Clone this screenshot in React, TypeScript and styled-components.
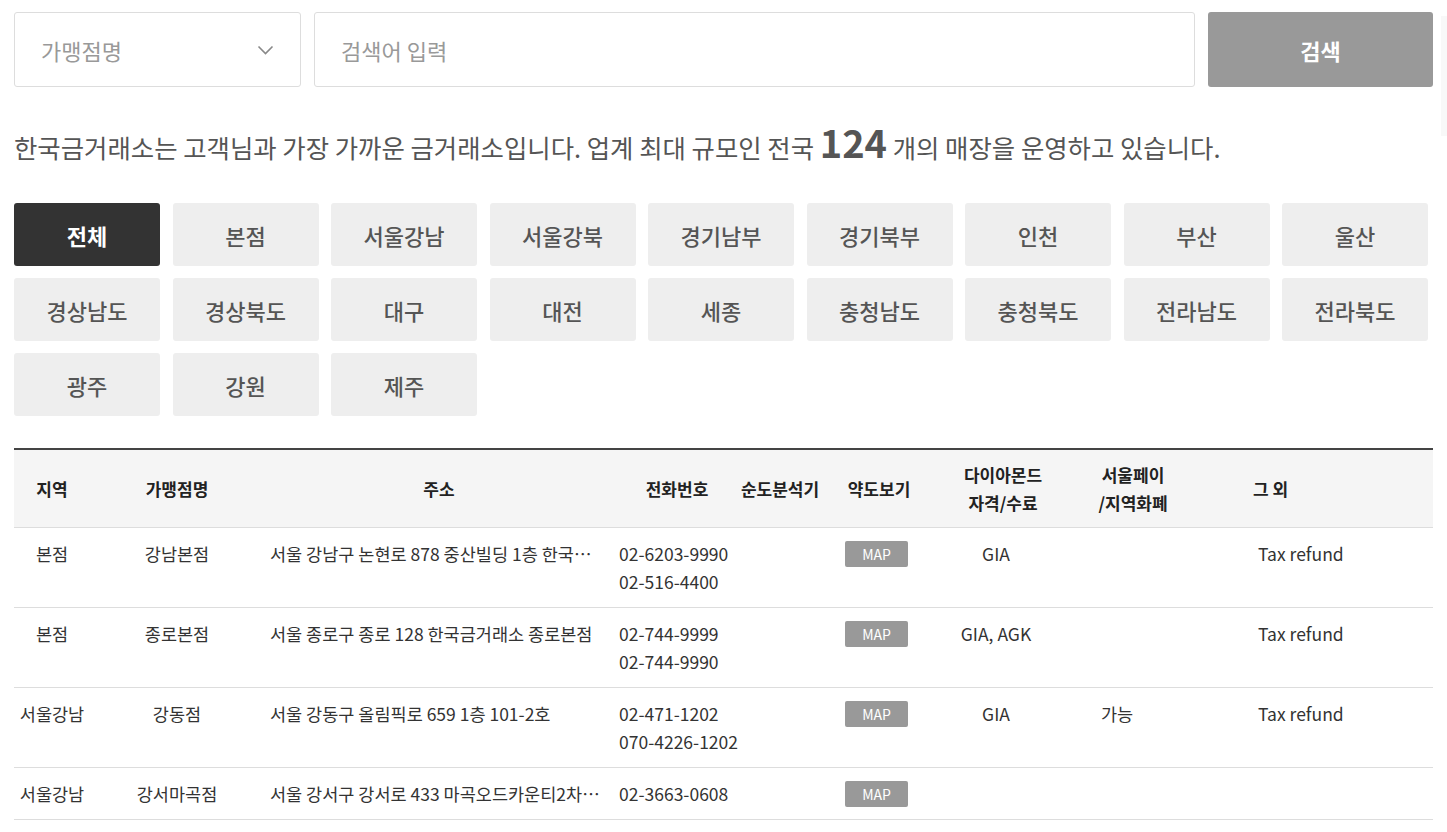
import React from 'react';
import styled, { createGlobalStyle } from 'styled-components';

const GlobalStyle = createGlobalStyle`
  html, body {
    margin: 0;
    padding: 0;
    background: #fff;
    overflow: hidden;
  }
  body {
    font-family: "Noto Sans CJK KR", "Noto Sans", sans-serif;
    color: #333;
  }
  * {
    box-sizing: border-box;
  }
`

const Page = styled.div`
  padding: 12px 14px 0;
`

const SearchBar = styled.div`
  display: flex;
  gap: 13px;
  height: 75px;
`

const Select = styled.div`
  width: 287px;
  border: 1px solid #ddd;
  border-radius: 3px;
  display: flex;
  align-items: center;
  justify-content: space-between;
  padding: 0 26px 0 26px;
  font-size: 22px;
  color: #999;
`

const SearchInput = styled.input`
  flex: 1;
  border: 1px solid #ddd;
  border-radius: 3px;
  padding: 0 26px;
  font-family: inherit;
  font-size: 22px;
  color: #333;
  outline: none;
  &::placeholder {
    color: #999;
  }
`

const SearchButton = styled.button`
  width: 225px;
  border: none;
  border-radius: 3px;
  background: #999;
  color: #fff;
  font-family: inherit;
  font-size: 22px;
  font-weight: 700;
`

const Intro = styled.p`
  margin: 36px 0 0;
  font-size: 25.4px;
  line-height: 40px;
  color: #555;
`

const Count = styled.strong`
  font-size: 38px;
  line-height: 1;
  font-weight: 700;
  color: #555;
`

const RegionGrid = styled.div`
  margin-top: 36px;
  display: grid;
  grid-template-columns: repeat(9, 146px);
  column-gap: 12.5px;
  row-gap: 12px;
`

const RegionButton = styled.button<{ active?: boolean }>`
  height: 63px;
  border: none;
  border-radius: 3px;
  background: ${p => (p.active ? '#333' : '#eee')};
  color: ${p => (p.active ? '#fff' : '#555')};
  font-family: inherit;
  font-size: 22px;
  font-weight: ${p => (p.active ? 700 : 500)};
`

const Table = styled.div`
  margin-top: 32px;
  border-top: 2px solid #444;
`

const COLS = '76px 174px 350px 126px 80px 118px 130px 130px 1fr';

const HeadRow = styled.div`
  display: grid;
  grid-template-columns: ${COLS};
  height: 78px;
  background: #f5f5f5;
  border-bottom: 1px solid #ddd;
  align-items: center;
`

const HeadCell = styled.div<{ left?: number }>`
  font-size: 17px;
  font-weight: 700;
  color: #222;
  line-height: 28px;
  white-space: nowrap;
  text-align: ${p => (p.left !== undefined ? 'left' : 'center')};
  padding-left: ${p => p.left ?? 0}px;
`

const Row = styled.div`
  display: grid;
  grid-template-columns: ${COLS};
  padding: 12px 0 11px;
  border-bottom: 1px solid #ddd;
  align-items: start;
`

const Cell = styled.div<{ align?: 'left' | 'center'; pl?: number; pr?: number }>`
  font-size: 17.5px;
  line-height: 28px;
  color: #333;
  white-space: nowrap;
  text-align: ${p => p.align ?? 'center'};
  padding-left: ${p => p.pl ?? 0}px;
  padding-right: ${p => p.pr ?? 0}px;
  min-width: 0;
`

const Address = styled(Cell)`
  overflow: hidden;
  text-overflow: ellipsis;
`

const MapButton = styled.span`
  display: flex;
  align-items: center;
  justify-content: center;
  width: 63px;
  height: 26px;
  margin-top: 1px;
  border-radius: 2px;
  background: #999;
  color: #fff;
  font-size: 14px;
  line-height: 1;
`

const EdgeStrip = styled.div`
  position: fixed;
  right: 0;
  top: 16px;
  width: 6px;
  height: 120px;
  background: #f8f8f8;
`

const regions = [
  '전체', '본점', '서울강남', '서울강북', '경기남부', '경기북부', '인천', '부산', '울산',
  '경상남도', '경상북도', '대구', '대전', '세종', '충청남도', '충청북도', '전라남도', '전라북도',
  '광주', '강원', '제주',
];

interface Store {
  area: string;
  name: string;
  address: string;
  phones: string[];
  diamond: string;
  pay: string;
  etc: string;
}

const stores: Store[] = [
  {
    area: '본점',
    name: '강남본점',
    address: '서울 강남구 논현로 878 중산빌딩 1층 한국금거래소 강남본점',
    phones: ['02-6203-9990', '02-516-4400'],
    diamond: 'GIA',
    pay: '',
    etc: 'Tax refund',
  },
  {
    area: '본점',
    name: '종로본점',
    address: '서울 종로구 종로 128 한국금거래소 종로본점',
    phones: ['02-744-9999', '02-744-9990'],
    diamond: 'GIA, AGK',
    pay: '',
    etc: 'Tax refund',
  },
  {
    area: '서울강남',
    name: '강동점',
    address: '서울 강동구 올림픽로 659 1층 101-2호',
    phones: ['02-471-1202', '070-4226-1202'],
    diamond: 'GIA',
    pay: '가능',
    etc: 'Tax refund',
  },
  {
    area: '서울강남',
    name: '강서마곡점',
    address: '서울 강서구 강서로 433 마곡오드카운티2차 1층 104호',
    phones: ['02-3663-0608'],
    diamond: '',
    pay: '',
    etc: '',
  },
  {
    area: '서울강남',
    name: '관악점',
    address: '서울 관악구 남부순환로 1820 1층',
    phones: ['02-877-9990'],
    diamond: '',
    pay: '',
    etc: '',
  },
];

const Chevron = () => (
  <svg width="17" height="10" viewBox="0 0 17 10">
    <polyline points="1.5,1.5 8.5,8.5 15.5,1.5" fill="none" stroke="#888" strokeWidth="1.6" />
  </svg>
);

export default function App() {
  return (
    <Page>
      <GlobalStyle />
      <EdgeStrip />
      <SearchBar>
        <Select>
          <span>가맹점명</span>
          <Chevron />
        </Select>
        <SearchInput placeholder="검색어 입력" />
        <SearchButton>검색</SearchButton>
      </SearchBar>

      <Intro>
        한국금거래소는 고객님과 가장 가까운 금거래소입니다. 업계 최대 규모인 전국 <Count>124</Count> 개의 매장을 운영하고 있습니다.
      </Intro>

      <RegionGrid>
        {regions.map((r, i) => (
          <RegionButton key={r} active={i === 0}>
            {r}
          </RegionButton>
        ))}
      </RegionGrid>

      <Table>
        <HeadRow>
          <HeadCell>지역</HeadCell>
          <HeadCell>가맹점명</HeadCell>
          <HeadCell>주소</HeadCell>
          <HeadCell>전화번호</HeadCell>
          <HeadCell>순도분석기</HeadCell>
          <HeadCell>약도보기</HeadCell>
          <HeadCell>
            다이아몬드
            <br />
            자격/수료
          </HeadCell>
          <HeadCell>
            서울페이
            <br />
            /지역화폐
          </HeadCell>
          <HeadCell left={55}>그 외</HeadCell>
        </HeadRow>
        {stores.map(s => (
          <Row key={s.name}>
            <Cell>{s.area}</Cell>
            <Cell>{s.name}</Cell>
            <Address align="left" pl={6} pr={12}>
              {s.address}
            </Address>
            <Cell align="left" pl={5}>
              {s.phones.map(p => (
                <div key={p}>{p}</div>
              ))}
            </Cell>
            <Cell />
            <Cell align="left" pl={25}>
              <MapButton>MAP</MapButton>
            </Cell>
            <Cell pr={14}>{s.diamond}</Cell>
            <Cell align="left" pl={33}>
              {s.pay}
            </Cell>
            <Cell align="left" pl={60}>
              {s.etc}
            </Cell>
          </Row>
        ))}
      </Table>
    </Page>
  );
}
